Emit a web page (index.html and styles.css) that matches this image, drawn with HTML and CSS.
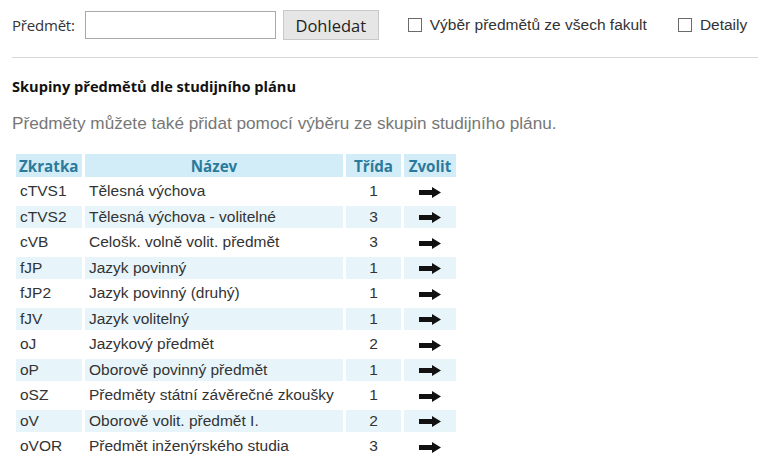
FILE: index.html
```html
<!DOCTYPE html>
<html lang="cs">
<head>
<meta charset="utf-8">
<title>Předměty</title>
<link rel="stylesheet" href="styles.css">
</head>
<body>
<div class="page">
  <form class="search">
    <label class="lbl" for="q">Předmět:</label>
    <input class="inp" id="q" type="text">
    <button class="btn" type="button">Dohledat</button>
    <label class="chk"><span class="box"></span>Výběr předmětů ze všech fakult</label>
    <label class="chk chk2"><span class="box"></span>Detaily</label>
  </form>
  <hr class="sep">
  <h2 class="title">Skupiny předmětů dle studijního plánu</h2>
  <p class="note">Předměty můžete také přidat pomocí výběru ze skupin studijního plánu.</p>
  <table class="grp">
    <thead>
      <tr><th class="c1">Zkratka</th><th class="c2">Název</th><th class="c3">Třída</th><th class="c4">Zvolit</th></tr>
    </thead>
    <tbody>
      <tr><td>cTVS1</td><td>Tělesná výchova</td><td class="n">1</td><td class="a"><svg class="arr" viewBox="0 0 22 11"><path d="M0 3H13V0L22 5.5L13 11V8H0Z"/></svg></td></tr>
      <tr><td>cTVS2</td><td>Tělesná výchova - volitelné</td><td class="n">3</td><td class="a"><svg class="arr" viewBox="0 0 22 11"><path d="M0 3H13V0L22 5.5L13 11V8H0Z"/></svg></td></tr>
      <tr><td>cVB</td><td>Celošk. volně volit. předmět</td><td class="n">3</td><td class="a"><svg class="arr" viewBox="0 0 22 11"><path d="M0 3H13V0L22 5.5L13 11V8H0Z"/></svg></td></tr>
      <tr><td>fJP</td><td>Jazyk povinný</td><td class="n">1</td><td class="a"><svg class="arr" viewBox="0 0 22 11"><path d="M0 3H13V0L22 5.5L13 11V8H0Z"/></svg></td></tr>
      <tr><td>fJP2</td><td>Jazyk povinný (druhý)</td><td class="n">1</td><td class="a"><svg class="arr" viewBox="0 0 22 11"><path d="M0 3H13V0L22 5.5L13 11V8H0Z"/></svg></td></tr>
      <tr><td>fJV</td><td>Jazyk volitelný</td><td class="n">1</td><td class="a"><svg class="arr" viewBox="0 0 22 11"><path d="M0 3H13V0L22 5.5L13 11V8H0Z"/></svg></td></tr>
      <tr><td>oJ</td><td>Jazykový předmět</td><td class="n">2</td><td class="a"><svg class="arr" viewBox="0 0 22 11"><path d="M0 3H13V0L22 5.5L13 11V8H0Z"/></svg></td></tr>
      <tr><td>oP</td><td>Oborově povinný předmět</td><td class="n">1</td><td class="a"><svg class="arr" viewBox="0 0 22 11"><path d="M0 3H13V0L22 5.5L13 11V8H0Z"/></svg></td></tr>
      <tr><td>oSZ</td><td>Předměty státní závěrečné zkoušky</td><td class="n">1</td><td class="a"><svg class="arr" viewBox="0 0 22 11"><path d="M0 3H13V0L22 5.5L13 11V8H0Z"/></svg></td></tr>
      <tr><td>oV</td><td>Oborově volit. předmět I.</td><td class="n">2</td><td class="a"><svg class="arr" viewBox="0 0 22 11"><path d="M0 3H13V0L22 5.5L13 11V8H0Z"/></svg></td></tr>
      <tr><td>oVOR</td><td>Předmět inženýrského studia</td><td class="n">3</td><td class="a"><svg class="arr" viewBox="0 0 22 11"><path d="M0 3H13V0L22 5.5L13 11V8H0Z"/></svg></td></tr>
    </tbody>
  </table>
</div>
</body>
</html>
```

FILE: styles.css
```css
html, body {
  margin: 0;
  padding: 0;
  background: #fff;
}
.page {
  padding: 10px 18px 0 12px;
  font-family: "Liberation Sans", Arial, sans-serif;
  color: #333;
}
.search {
  display: flex;
  align-items: center;
  height: 30px;
  margin: 0;
}
.lbl {
  font-family: "Open Sans", "Liberation Sans", sans-serif;
  font-size: 15px;
  letter-spacing: -0.2px;
  color: #333;
  margin-right: 10px;
}
.inp {
  box-sizing: border-box;
  width: 191px;
  height: 28px;
  border: 1px solid #a9a9a9;
  margin: 0;
  padding: 0;
}
.btn {
  box-sizing: border-box;
  margin-left: 7px;
  width: 96px;
  height: 30px;
  border: 1px solid #c9c9c9;
  background: #e6e6e6;
  font-family: "Open Sans", "Liberation Sans", sans-serif;
  font-size: 16.5px;
  color: #222;
  padding: 0;
}
.chk {
  display: flex;
  align-items: center;
  margin-left: 29px;
  font-size: 15.5px;
  color: #333;
}
.chk2 {
  margin-left: 31px;
}
.box {
  box-sizing: border-box;
  width: 14px;
  height: 14px;
  border: 1px solid #6a6a6a;
  margin-right: 8px;
}
.sep {
  border: 0;
  border-top: 1px solid #d6d6d6;
  margin: 17px 0 0 0;
  height: 0;
}
.title {
  font-family: "Open Sans", "Liberation Sans", sans-serif;
  font-size: 14.6px;
  font-weight: bold;
  color: #111;
  margin: 19px 0 0 0;
  line-height: 18px;
}
.note {
  font-size: 17.2px;
  color: #777;
  margin: 18px 0 0 0;
  line-height: 20px;
}
.grp {
  border-spacing: 3px;
  margin: 18px 0 0 1px;
  font-size: 15.5px;
}
.grp th {
  background: #d3edf8;
  color: #2b7a9c;
  font-family: "Open Sans", "Liberation Sans", sans-serif;
  font-size: 15.2px;
  font-weight: bold;
  height: 23px;
  padding: 0 3px;
  text-align: center;
}
.grp th.c1 { width: 60px; text-align: left; }
.grp th.c2 { width: 252px; }
.grp th.c3 { width: 49px; }
.grp th.c4 { width: 46px; }
.grp td {
  height: 22.5px;
  padding: 0 4px;
  color: #333;
  white-space: nowrap;
}
.grp tbody tr:nth-child(even) td {
  background: #e7f5fb;
}
.grp td.n, .grp td.a {
  text-align: center;
}
.arr {
  display: inline-block;
  width: 22px;
  height: 11px;
  vertical-align: middle;
  fill: #111;
}
```
